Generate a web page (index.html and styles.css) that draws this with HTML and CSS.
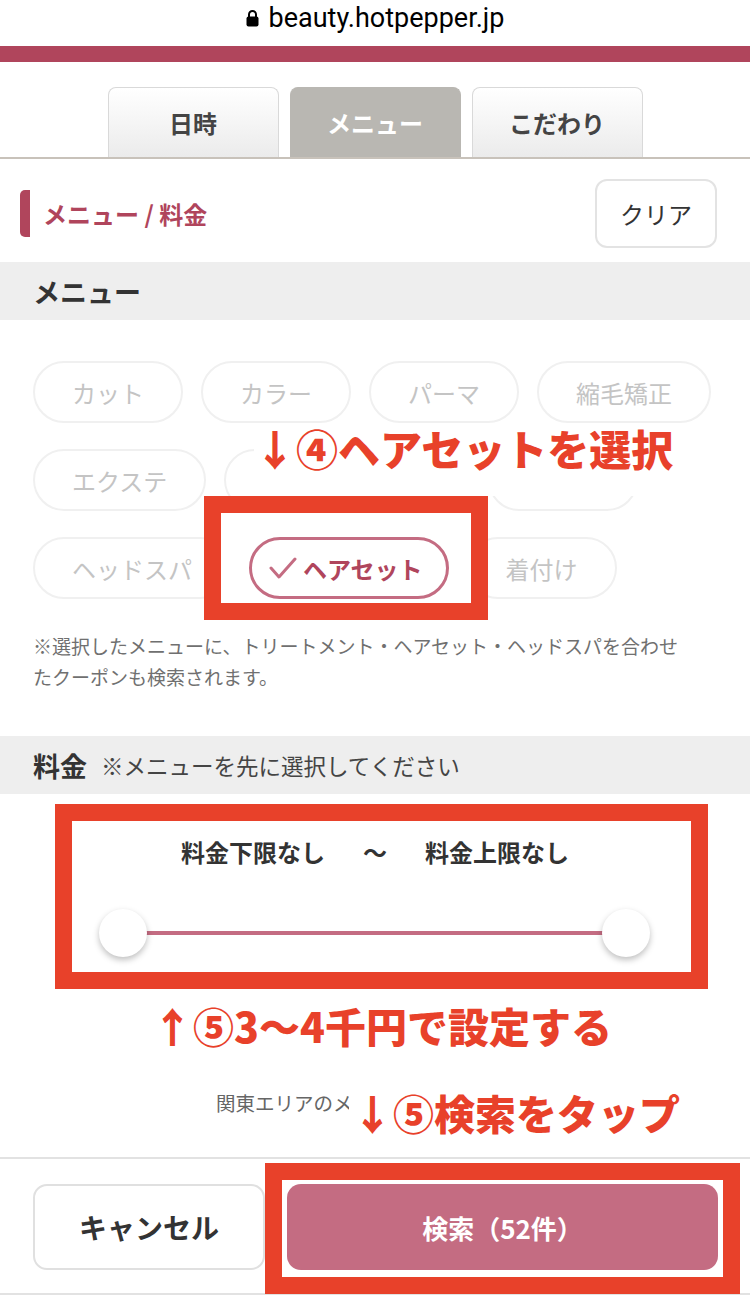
FILE: index.html
```html
<!DOCTYPE html>
<html lang="ja">
<head>
    <meta charset="UTF-8">
    <meta name="viewport" content="width=device-width, initial-scale=1.0">
    <title>検索条件 - メニュー / 料金</title>
    <link rel="stylesheet" href="styles.css">
</head>
<body>

<div class="page">
    <div class="urlbar">
        <svg class="lock" width="13" height="18" viewBox="0 0 13 18">
            <path d="M3 8V5.5a3.5 3.5 0 0 1 7 0V8" fill="none" stroke="#000" stroke-width="2"/>
            <rect x="0.5" y="7.5" width="12" height="10" rx="2" fill="#000"/>
        </svg>
        <span>beauty.hotpepper.jp</span>
    </div>
    <div class="brand-bar"></div>

    <div class="tabs">
        <div class="tab">日時</div>
        <div class="tab active">メニュー</div>
        <div class="tab">こだわり</div>
    </div>

    <div class="section-head">
        <h2 class="section-title">メニュー / 料金</h2>
        <button class="clear-btn">クリア</button>
    </div>

    <div class="band"><h3>メニュー</h3></div>

    <div class="chips">
        <span class="chip">カット</span>
        <span class="chip">カラー</span>
        <span class="chip">パーマ</span>
        <span class="chip">縮毛矯正</span>
        <span class="chip">エクステ</span>
        <span class="chip">トリートメント</span>
        <span class="chip">メイク</span>
        <span class="chip">ヘッドスパ</span>
        <span class="chip selected">
            <svg width="28" height="22" viewBox="0 0 28 22"><polyline points="2,11 10,20 26,2" fill="none" stroke="#c46c82" stroke-width="3" stroke-linecap="round" stroke-linejoin="round"/></svg>
            ヘアセット
        </span>
        <span class="chip">着付け</span>
    </div>

    <p class="note">※選択したメニューに、トリートメント・ヘアセット・ヘッドスパを合わせたクーポンも検索されます。</p>

    <div class="band"><h3>料金</h3><span class="band-note">※メニューを先に選択してください</span></div>

    <div class="price">
        <p class="price-range"><span>料金下限なし</span><span class="tilde">〜</span><span>料金上限なし</span></p>
        <div class="slider">
            <div class="track"></div>
            <div class="knob"></div>
            <div class="knob"></div>
        </div>
        <p class="average">関東エリアのメニュー平均料金</p>
    </div>

    <div class="footer">
        <button class="btn-cancel">キャンセル</button>
        <button class="btn-search">検索（52件）</button>
    </div>

    <!-- 説明用の注釈 -->
    <div class="mark mark-chip"></div>
    <div class="mark mark-price"></div>
    <div class="mark mark-search"></div>
    <p class="callout callout-chip">↓④ヘアセットを選択</p>
    <p class="callout callout-price">↑⑤3〜4千円で設定する</p>
    <p class="callout callout-search">↓⑤検索をタップ</p>
</div>

</body>
</html>
```

FILE: styles.css
```css
body {
    margin: 0;
    font-family: "Noto Sans CJK JP", "Noto Sans", sans-serif;
    color: #333;
    background: #fff;
}
.page {
    position: relative;
    width: 750px;
    height: 1296px;
    overflow: hidden;
}
.urlbar {
    height: 46px;
    display: flex;
    justify-content: center;
    align-items: center;
    gap: 10px;
    font-family: Roboto, "Liberation Sans", sans-serif;
    font-size: 27px;
    color: #000;
    padding-bottom: 10px;
    box-sizing: border-box;
}
.brand-bar {
    height: 16px;
    background: #b0455c;
}
.tabs {
    display: flex;
    justify-content: center;
    align-items: flex-end;
    gap: 11px;
    padding-top: 25px;
    border-bottom: 2px solid #c8c2ba;
}
.tab {
    width: 171px;
    height: 70px;
    box-sizing: border-box;
    border: 1px solid #d9d9d9;
    border-bottom: none;
    border-radius: 8px 8px 0 0;
    background: linear-gradient(#ffffff, #ebebeb);
    display: flex;
    justify-content: center;
    align-items: center;
    font-size: 24px;
    font-weight: bold;
    color: #444;
}
.tab.active {
    background: #b9b7b2;
    border-color: #b9b7b2;
    color: #fff;
}
.section-head {
    display: flex;
    align-items: center;
    justify-content: space-between;
    padding: 20px 33px 14px 20px;
}
.section-title {
    margin: 0;
    font-size: 24px;
    color: #b0455c;
    border-left: 10px solid #b0455c;
    border-radius: 5px;
    padding: 6px 0 6px 13px;
    line-height: 35px;
}
.clear-btn {
    width: 122px;
    height: 69px;
    background: #fff;
    border: 2px solid #e3e3e3;
    border-radius: 12px;
    font-family: inherit;
    font-size: 24px;
    color: #333;
}
.band {
    height: 58px;
    background: #eeeeee;
    display: flex;
    align-items: center;
    padding-left: 33px;
}
.band h3 {
    margin: 0;
    font-size: 27px;
    color: #333;
}
.band-note {
    margin-left: 14px;
    font-size: 22.5px;
    color: #444;
}
.chips {
    display: flex;
    flex-wrap: wrap;
    gap: 26px 18px;
    padding: 41px 30px 0 33px;
}
.chip {
    height: 62px;
    box-sizing: border-box;
    border: 2px solid #f0f0f0;
    border-radius: 31px;
    padding: 0 37px;
    display: flex;
    align-items: center;
    font-size: 24px;
    color: #c4c4c4;
}
.chip.selected {
    position: relative;
    z-index: 2;
    border: 3px solid #c46c82;
    padding: 0 23px 0 17px;
    gap: 6px;
    color: #b0455c;
    font-weight: bold;
}
.note {
    margin: 31px 0 0 33px;
    width: 655px;
    font-size: 19px;
    line-height: 31px;
    color: #707070;
    height: 106px;
}
.price {
    height: 363px;
    padding-top: 42px;
    box-sizing: border-box;
}
.price-range {
    margin: 0;
    display: flex;
    justify-content: center;
    font-size: 24px;
    font-weight: bold;
    line-height: 32px;
    color: #333;
}
.tilde {
    margin: 0 38px;
}
.slider {
    position: relative;
    height: 48px;
    margin: 41px 100px 0 99px;
}
.track {
    position: absolute;
    left: 24px;
    right: 24px;
    top: 22px;
    height: 4px;
    background: #c46c82;
}
.knob {
    position: absolute;
    top: 0;
    left: 0;
    width: 48px;
    height: 48px;
    border-radius: 50%;
    background: #fff;
    box-shadow: 0 3px 6px rgba(0, 0, 0, 0.25);
}
.knob + .knob {
    left: auto;
    right: 0;
}
.average {
    margin: 131px 0 0 216px;
    font-size: 19.5px;
    color: #666;
}
.footer {
    border-top: 2px solid #e2e2e2;
    border-bottom: 2px solid #e2e2e2;
    display: flex;
    gap: 22px;
    padding: 25px 32px 23px 33px;
}
.footer button {
    height: 86px;
    border-radius: 14px;
    font-family: inherit;
    font-weight: bold;
}
.btn-cancel {
    width: 232px;
    background: #fff;
    border: 2px solid #e0e0e0;
    font-size: 28px;
    color: #333;
}
.btn-search {
    position: relative;
    z-index: 2;
    flex: 1;
    background: #c46c82;
    border: none;
    font-size: 26px;
    color: #fff;
}
.mark {
    position: absolute;
    z-index: 1;
    border: 17px solid #e8412a;
    background: #fff;
}
.mark-chip {
    left: 204px;
    top: 496px;
    width: 250px;
    height: 90px;
}
.mark-price {
    left: 55px;
    top: 804px;
    width: 619px;
    height: 151px;
    background: transparent;
}
.mark-search {
    left: 265px;
    top: 1163px;
    width: 441px;
    height: 97px;
    background: transparent;
}
.callout {
    position: absolute;
    z-index: 3;
    margin: 0;
    color: #e8412a;
    font-weight: 900;
    background: #fff;
    line-height: 1.15;
    white-space: nowrap;
}
.callout-chip {
    left: 254px;
    top: 424px;
    font-size: 42px;
    padding: 0 10px 24px 0;
}
.callout-price {
    left: 152px;
    top: 1002px;
    font-size: 41px;
    background: transparent;
}
.callout-search {
    left: 349px;
    top: 1089px;
    font-size: 41px;
    padding: 0 10px 4px 3px;
}
```
